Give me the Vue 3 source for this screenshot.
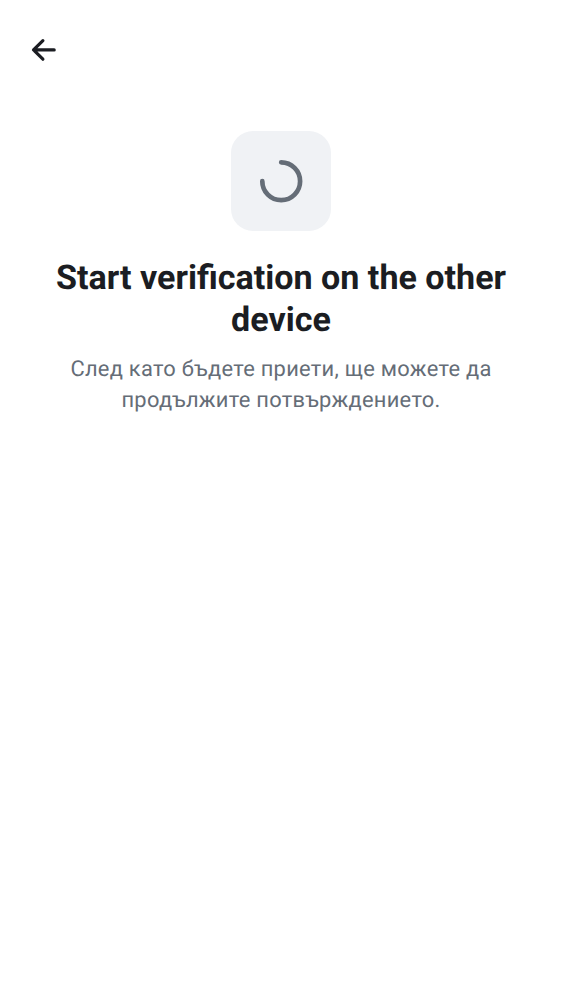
<script setup>
const title = 'Start verification on the other device'
const message = 'След като бъдете приети, ще можете да продължите потвърждението.'
</script>

<template>
  <main class="screen">
    <header class="bar">
      <button class="back" aria-label="Back">
        <svg width="28" height="24" viewBox="0 0 28 24" fill="none">
          <path d="M24.200 11.900H3.800M12.900 2.600L3.500 11.900l9.400 9.300" stroke="#1b1d22" stroke-width="3.200" stroke-linecap="round" stroke-linejoin="round" />
        </svg>
      </button>
    </header>
    <section class="content">
      <div class="tile">
        <svg width="44" height="44" viewBox="0 0 44 44" fill="none">
          <path d="M22.200 3.300A18.900 18.900 0 1 1 3.300 22.200" stroke="#656d77" stroke-width="4.700" stroke-linecap="round" />
        </svg>
      </div>
      <h1>{{ title }}</h1>
      <p>{{ message }}</p>
    </section>
  </main>
</template>

<style>
body { background: #fff; }
</style>

<style scoped>
.screen {
  box-sizing: border-box;
  height: 1000px;
  background: #fff;
  font-family: Roboto, sans-serif;
  text-rendering: geometricPrecision;
}
.bar {
  display: flex;
  align-items: center;
  height: 100px;
  padding-left: 30px;
}
.back {
  display: flex;
  padding: 0;
  border: 0;
  background: none;
}
.content {
  display: flex;
  flex-direction: column;
  align-items: center;
  padding: 31px 40px 0;
  text-align: center;
}
.tile {
  display: flex;
  align-items: center;
  justify-content: center;
  width: 100px;
  height: 100px;
  border-radius: 22px;
  background: #f0f2f5;
}
h1 {
  margin: 26px 0 0;
  font-size: 34.1px;
  font-weight: 700;
  line-height: 42px;
  color: #1b1d22;
}
p {
  margin: 13px 0 0;
  font-size: 21.875px;
  line-height: 31px;
  letter-spacing: 0.28px;
  color: #656d77;
}
</style>
